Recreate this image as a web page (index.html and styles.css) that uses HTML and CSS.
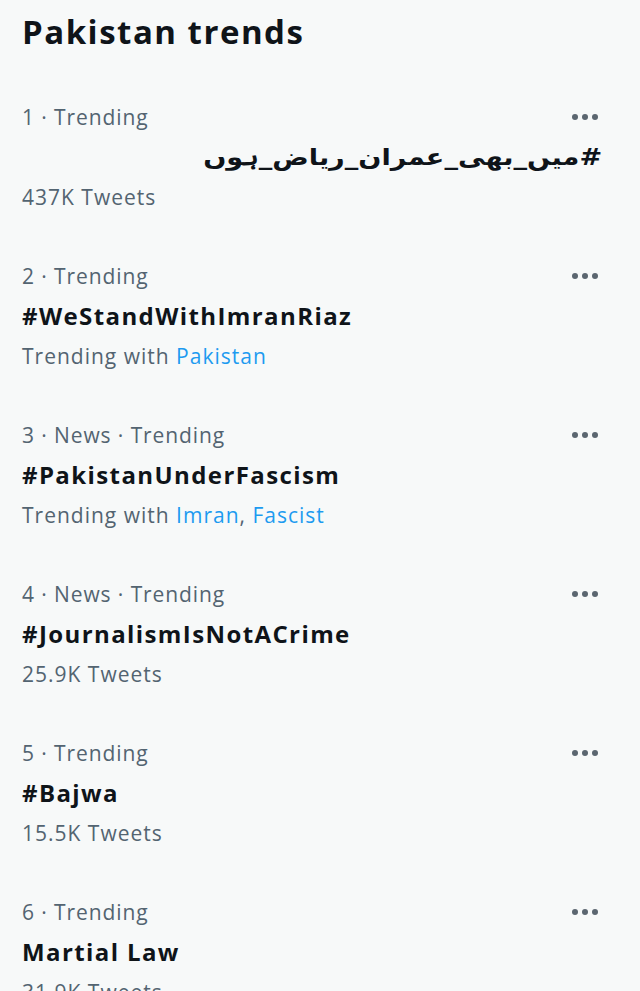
FILE: index.html
```html
<!DOCTYPE html>
<html>
<head>
<meta charset="utf-8">
<link rel="stylesheet" href="styles.css">
</head>
<body>
<div class="panel">
  <h2 class="title">Pakistan trends</h2>

  <div class="trend">
    <div class="meta-row"><span class="meta">1 · Trending</span><span class="more"><i></i><i></i><i></i></span></div>
    <div class="name rtl-row"><span class="rtl" dir="rtl">#میں_بھی_عمران_ریاض_ہوں</span></div>
    <div class="sub">437K Tweets</div>
  </div>

  <div class="trend">
    <div class="meta-row"><span class="meta">2 · Trending</span><span class="more"><i></i><i></i><i></i></span></div>
    <div class="name">#WeStandWithImranRiaz</div>
    <div class="sub">Trending with <span class="link">Pakistan</span></div>
  </div>

  <div class="trend">
    <div class="meta-row"><span class="meta">3 · News · Trending</span><span class="more"><i></i><i></i><i></i></span></div>
    <div class="name">#PakistanUnderFascism</div>
    <div class="sub">Trending with <span class="link">Imran</span>, <span class="link">Fascist</span></div>
  </div>

  <div class="trend">
    <div class="meta-row"><span class="meta">4 · News · Trending</span><span class="more"><i></i><i></i><i></i></span></div>
    <div class="name">#JournalismIsNotACrime</div>
    <div class="sub">25.9K Tweets</div>
  </div>

  <div class="trend">
    <div class="meta-row"><span class="meta">5 · Trending</span><span class="more"><i></i><i></i><i></i></span></div>
    <div class="name">#Bajwa</div>
    <div class="sub">15.5K Tweets</div>
  </div>

  <div class="trend">
    <div class="meta-row"><span class="meta">6 · Trending</span><span class="more"><i></i><i></i><i></i></span></div>
    <div class="name">Martial Law</div>
    <div class="sub">31.9K Tweets</div>
  </div>
</div>
</body>
</html>
```
FILE: styles.css
```css
html, body {
  margin: 0;
  padding: 0;
  background: #f7f9f9;
}
body {
  font-family: "Open Sans", "DejaVu Sans", sans-serif;
  color: #0f1419;
  width: 640px;
  height: 991px;
  overflow: hidden;
}
.panel {
  padding: 0 38px 0 22px;
}
.title {
  margin: 0;
  padding: 10px 0 24px;
  font-size: 33px;
  line-height: 44px;
  font-weight: 700;
  letter-spacing: 1.5px;
}
.trend {
  padding: 20px 0 21px;
}
.meta-row {
  display: flex;
  justify-content: space-between;
  align-items: center;
  height: 38px;
}
.meta {
  font-size: 21px;
  color: #536471;
  line-height: 38px;
  letter-spacing: 0.9px;
}
.more {
  display: flex;
  gap: 4px;
  margin-right: 4px;
}
.more i {
  display: block;
  width: 6px;
  height: 6px;
  border-radius: 50%;
  background: #5b6670;
}
.name {
  font-size: 24px;
  font-weight: 700;
  line-height: 42px;
  height: 42px;
  letter-spacing: 1.4px;
}
.rtl-row {
  display: flex;
  justify-content: flex-end;
  letter-spacing: 0;
}
.rtl {
  display: inline-block;
  font-family: "DejaVu Sans", sans-serif;
  font-weight: 700;
  font-size: 23px;
  transform: scaleX(1.18);
  transform-origin: right center;
}
.sub {
  font-size: 21px;
  color: #536471;
  line-height: 38px;
  letter-spacing: 1px;
}
.link {
  color: #1d9bf0;
}
```
